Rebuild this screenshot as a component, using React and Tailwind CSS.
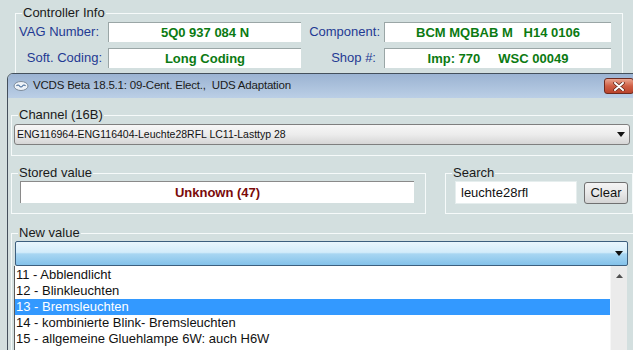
import React from "react";

const BG = "bg-[#d3dfdf]";

function Group({ label, className, children }) {
  return (
    <div className={"relative border border-[#f6fafa] " + className}>
      <span className="absolute left-[6px] top-[-9px] px-[1px] bg-[#d3dfdf] text-[13px] leading-[16px] text-[#1a1a1a] whitespace-nowrap">
        {label}
      </span>
      {children}
    </div>
  );
}

function InfoBox({ children, className }) {
  return (
    <div
      className={
        "h-[20px] bg-white border-t border-l border-[#9aa6a6] flex items-center justify-center text-[13px] font-bold text-[#0b7a12] whitespace-pre " +
        className
      }
    >
      {children}
    </div>
  );
}

function Arrow({ className }) {
  return (
    <svg width="8" height="5" viewBox="0 0 8 5" className={className}>
      <path d="M0 0 L8 0 L4 5 Z" fill="#111" />
    </svg>
  );
}

export default function App() {
  return (
    <div
      className={
        "relative w-[633px] h-[350px] overflow-hidden font-['Liberation_Sans',Arial,sans-serif] " + BG
      }
    >
      {/* Controller Info */}
      <div className="pt-[13px] pl-[15px]">
        <Group label="Controller Info" className="w-[608px] h-[90px]">
          <div className="flex flex-col gap-[6px] pt-[8px]">
            <div className="flex items-center">
              <div className="w-[92px] text-right pr-[9px] text-[13px] text-[#1f3a93]">VAG Number:</div>
              <InfoBox className="w-[193px]">5Q0 937 084 N</InfoBox>
              <div className="w-[83px] text-right pr-[4px] text-[13px] text-[#1f3a93]">Component:</div>
              <InfoBox className="w-[227px]">{"BCM MQBAB M   H14 0106"}</InfoBox>
            </div>
            <div className="flex items-center">
              <div className="w-[92px] text-right pr-[6px] text-[13px] text-[#1f3a93]">Soft. Coding:</div>
              <InfoBox className="w-[193px]">Long Coding</InfoBox>
              <div className="w-[83px] text-right pr-[8px] text-[13px] text-[#1f3a93]">Shop #:</div>
              <InfoBox className="w-[227px]">{"Imp: 770     WSC 00049"}</InfoBox>
            </div>
          </div>
        </Group>
      </div>

      {/* Adaptation window */}
      <div className={"absolute top-[73px] left-[7px] w-[634px] h-[290px] border border-[#44505c] rounded-t-[6px] overflow-hidden " + BG}>
        {/* title bar */}
        <div className="h-[24px] flex items-center bg-gradient-to-b from-[#9bb3d2] to-[#bbcfe6] pl-[5px] pr-[6px]">
          <svg width="16" height="12" viewBox="0 0 16 12" className="mr-[4px]">
            <ellipse cx="8" cy="6" rx="7" ry="4.5" fill="#eef3f8" stroke="#7d8c9c" strokeWidth="1" />
            <path d="M3.5 6 Q5 4 6.5 6 T9.5 6 T12.5 6" fill="none" stroke="#4b6f9c" strokeWidth="1.2" />
          </svg>
          <span className="text-[11.5px] text-[#1b1b1b] whitespace-pre tracking-[-0.2px]">
            {"VCDS Beta 18.5.1: 09-Cent. Elect.,  UDS Adaptation"}
          </span>
          <div className="ml-auto w-[30px] h-[16px] rounded-[3px] border border-[#6e2a1f] bg-gradient-to-b from-[#e9a591] via-[#cf5f45] to-[#b9432c] flex items-center justify-center">
            <svg width="12" height="9" viewBox="0 0 12 9">
              <path d="M2 1 L10 8 M10 1 L2 8" stroke="#5a2218" strokeWidth="3.4" strokeLinecap="round" />
              <path d="M2 1 L10 8 M10 1 L2 8" stroke="#ffffff" strokeWidth="2" strokeLinecap="round" />
            </svg>
          </div>
        </div>

        {/* body */}
        <div className="pl-[3px] flex flex-col">
          {/* Channel */}
          <Group label="Channel (16B)" className="mt-[17px] w-[623px] h-[41px]">
            <div className="pl-[2px] pt-[8px]">
              <div className="w-[616px] h-[21px] rounded-[3px] border border-[#7f7f7f] bg-gradient-to-b from-[#f7f7f7] via-[#ececec] to-[#d6d6d6] flex items-center pl-[2px] pr-[4px]">
                <span className="text-[10.5px] text-[#111] whitespace-nowrap">
                  ENG116964-ENG116404-Leuchte28RFL LC11-Lasttyp 28
                </span>
                <Arrow className="ml-auto" />
              </div>
            </div>
          </Group>

          {/* Stored value + Search */}
          <div className="mt-[17px] flex">
            <Group label="Stored value" className="w-[415px] h-[41px]">
              <div className="pl-[8px] pt-[7px]">
                <div className="w-[394px] h-[22px] bg-white border-t border-l border-[#8a8a8a] flex items-center justify-center text-[13px] font-bold text-[#7a0a0a]">
                  Unknown (47)
                </div>
              </div>
            </Group>
            <Group label="Search" className="ml-[19px] w-[188px] h-[41px]">
              <div className="pl-[9px] pt-[7px] flex items-start gap-[7px]">
                <div className="w-[122px] h-[23px] bg-white border border-[#e6eeee] flex items-center pl-[5px] text-[13px] text-[#111]">
                  leuchte28rfl
                </div>
                <div className="mt-[1px] w-[44px] h-[22px] rounded-[3px] border border-[#707070] bg-gradient-to-b from-[#f4f4f4] via-[#e8e8e8] to-[#d4d4d4] flex items-center justify-center text-[13px] text-[#111]">
                  Clear
                </div>
              </div>
            </Group>
          </div>

          {/* New value */}
          <Group label="New value" className="mt-[19px] w-[623px] h-[120px]">
            <div className="pl-[3px] pt-[7px]">
              <div className="relative w-[613px]">
                <div className="h-[25px] rounded-[2px] border border-[#3d5f7e] bg-[linear-gradient(to_bottom,#e9f6fd_0%,#d3ecfa_45%,#a8d6f2_52%,#84c2ea_100%)] flex items-center pr-[4px]">
                  <Arrow className="ml-auto" />
                </div>
                {/* dropdown list */}
                <div className="absolute left-[-1px] top-[25px] w-[613px] h-[100px] flex bg-white border-l border-[#5c5c5c]">
                  <div className="flex-1 pt-[1px] text-[13px] text-[#111]">
                    <div className="h-[16px] leading-[16px] pl-[1px] whitespace-nowrap">11 - Abblendlicht</div>
                    <div className="h-[16px] leading-[16px] pl-[1px] whitespace-nowrap">12 - Blinkleuchten</div>
                    <div className="h-[16px] leading-[16px] pl-[1px] whitespace-nowrap bg-[#3399ff] text-white">13 - Bremsleuchten</div>
                    <div className="h-[16px] leading-[16px] pl-[1px] whitespace-nowrap">14 - kombinierte Blink- Bremsleuchten</div>
                    <div className="h-[16px] leading-[16px] pl-[1px] whitespace-nowrap">15 - allgemeine Gluehlampe 6W: auch H6W</div>
                  </div>
                  <div className="w-[17px] bg-[#ebebeb] border-l border-[#f6f6f6] flex justify-center pt-[8px]">
                    <svg width="7" height="4" viewBox="0 0 7 4">
                      <path d="M0 4 L7 4 L3.5 0 Z" fill="#505050" />
                    </svg>
                  </div>
                </div>
              </div>
            </div>
          </Group>
        </div>
      </div>
    </div>
  );
}
